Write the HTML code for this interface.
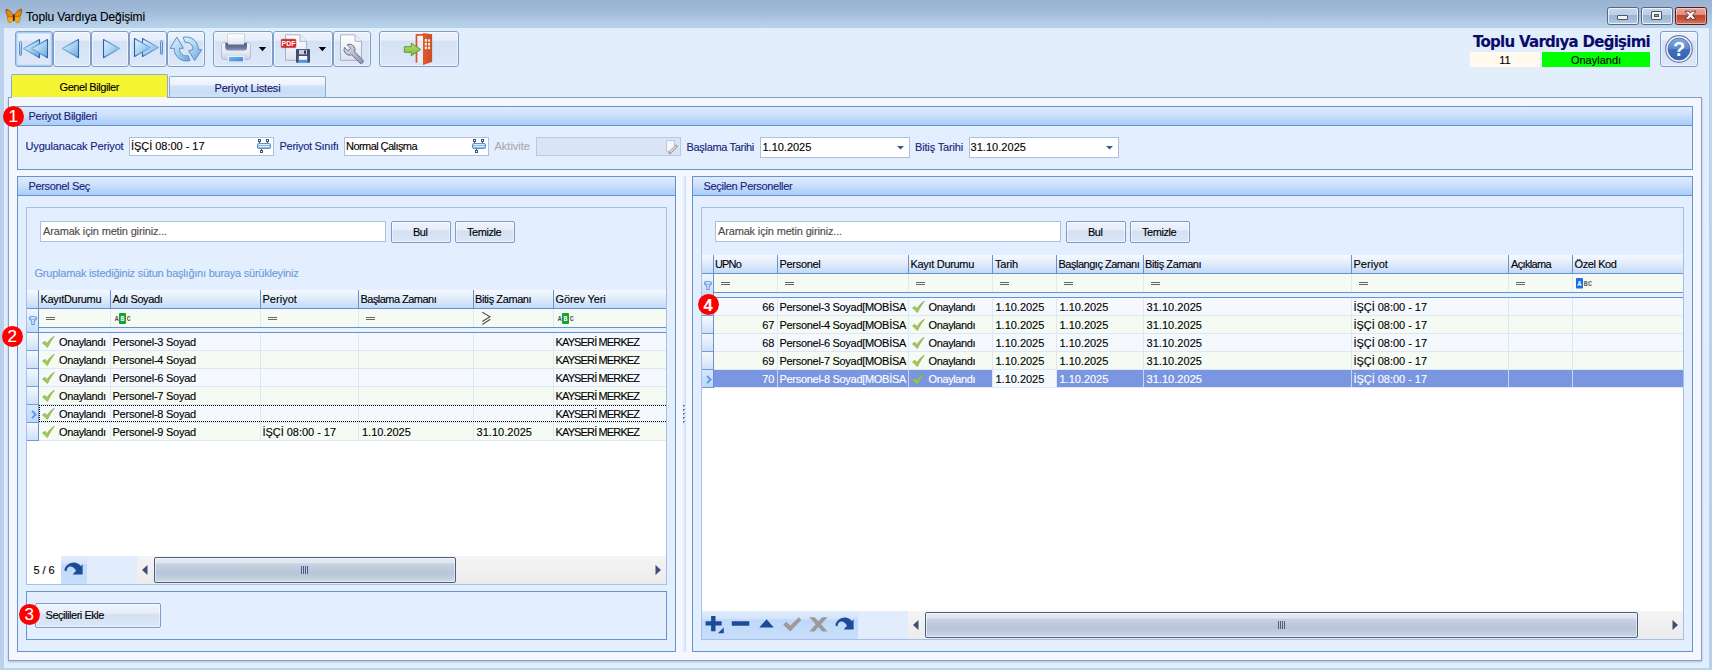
<!DOCTYPE html>
<html lang="tr"><head><meta charset="utf-8"><title>Toplu Vardıya Değişimi</title>
<style>
html,body{margin:0;padding:0}
body{width:1712px;height:670px;overflow:hidden;position:relative;background:#b9d1ea;font-family:"Liberation Sans",sans-serif;font-size:11px;color:#000}
div{position:absolute;box-sizing:border-box}
svg{position:absolute;overflow:visible}
.t{white-space:pre;line-height:16px;-webkit-text-stroke:.12px}
.tb{border:1px solid #7f9dc9;border-radius:3px;background:linear-gradient(to bottom,#ebf2fc 0,#e7effb 24%,#d5e2f5 27%,#dce8f8 100%);box-shadow:inset 0 0 0 1px rgba(255,255,255,.55)}
.gh{border:1px solid #6593cf;background:linear-gradient(to bottom,#e0ecfd 0,#cde0fb 45%,#b4d2fa 80%,#abcdfa 100%)}
.gb{border:1px solid #6593cf;border-top:none;background:#e3efff}
.pn{border:1px solid #a4c0e8;background:#e3efff}
.inp{border:1px solid #abc1de;background:#fff}
.btn{border:1px solid #7f9dc9;border-radius:2px;background:linear-gradient(to bottom,#eef4fc 0,#e5edfa 40%,#d4e1f3 44%,#dbe6f6 100%);box-shadow:inset 0 0 0 1px rgba(255,255,255,.5)}
.hd{background:linear-gradient(to bottom,#f7faff 0,#e4eefc 40%,#cfe1fa 80%,#c2d9fa 100%)}
.red{border-radius:50%;background:#f00;color:#fff;text-align:center}

</style></head><body>
<div style="left:0px;top:0px;width:1712px;height:28px;background:linear-gradient(to bottom,#99b3d3 0,#a1bad8 40%,#b0c9e4 75%,#b9d3eb 95%,#b5cde7 100%)"></div>
<div style="left:0px;top:28px;width:4px;height:642px;background:#b9d1ea"></div>
<div style="left:1709px;top:28px;width:3px;height:642px;background:linear-gradient(to bottom,#c3d7ed 0,#bad1ea 60%,#b9d0ea 100%)"></div>
<div style="left:1709px;top:28px;width:1px;height:300px;background:linear-gradient(to bottom,#b5cde8,#bcd2eb)"></div>
<div style="left:0px;top:668px;width:1712px;height:2px;background:#b9d1ea"></div>
<div style="left:4px;top:28px;width:1705px;height:640px;background:#e3eefd"></div>
<svg style="left:5px;top:8px" width="18" height="16" viewBox="0 0 18 16"><defs>
<linearGradient id="bw" x1="0" y1="0" x2="1" y2="1"><stop offset="0" stop-color="#8a4a10"/><stop offset=".25" stop-color="#e2820a"/><stop offset="1" stop-color="#f2930c"/></linearGradient>
<linearGradient id="bv" x1="0" y1="0" x2="0" y2="1"><stop offset="0" stop-color="#f7a00c"/><stop offset="1" stop-color="#fdb010"/></linearGradient></defs>
<g><path d="M8.200 8.500C7.500 4.500 4.500 1.500 1 1.200 .8 3.500 1.500 6.500 2.600 8.400 4.500 8 6.500 8.300 8.200 9.500Z" fill="url(#bw)" stroke="#7a4512" stroke-width=".6"/>
<path d="M8.300 9.800C6.500 8.300 4 8.200 2.600 8.800 2.200 11 3 13.800 4.600 14.900 6.200 14.500 7.800 12.800 8.400 11.500Z" fill="url(#bv)" stroke="#a8620c" stroke-width=".6"/></g>
<g transform="translate(17.600,0) scale(-1,1)"><path d="M8.200 8.500C7.500 4.500 4.500 1.500 1 1.200 .8 3.500 1.500 6.500 2.600 8.400 4.500 8 6.500 8.300 8.200 9.500Z" fill="url(#bw)" stroke="#7a4512" stroke-width=".6"/>
<path d="M8.300 9.800C6.500 8.300 4 8.200 2.600 8.800 2.200 11 3 13.800 4.600 14.900 6.200 14.500 7.800 12.800 8.400 11.500Z" fill="url(#bv)" stroke="#a8620c" stroke-width=".6"/></g>
<path d="M8.800 6.800V12.300" stroke="#4a2018" stroke-width="1.700" stroke-linecap="round"/>
</svg>
<div class="t" style="left:26px;top:9.03px;font-size:12px;letter-spacing:-0.129px;">Toplu Vardıya Değişimi</div>
<div style="left:1607px;top:7px;width:32px;height:18px;border:1px solid #5a6780;border-radius:2.500px;box-shadow:inset 0 0 0 1px rgba(255,255,255,.7);background:linear-gradient(to bottom,#c6d7ec 0,#bccfe8 44%,#9cb5d3 47%,#a4bcd9 75%,#b9cee7 100%)"><div style="left:9px;top:7px;width:11px;height:5px;background:#f4f2ee;border:1px solid #4d5568;border-radius:1px"></div></div>
<div style="left:1641px;top:7px;width:32px;height:18px;border:1px solid #5a6780;border-radius:2.500px;box-shadow:inset 0 0 0 1px rgba(255,255,255,.7);background:linear-gradient(to bottom,#c6d7ec 0,#bccfe8 44%,#9cb5d3 47%,#a4bcd9 75%,#b9cee7 100%)"><div style="left:9px;top:3px;width:11px;height:9px;background:#f4f2ee;border:1px solid #4d5568;border-radius:1px"><div style="left:2px;top:2px;width:5px;height:3px;background:#8fa8cc;border:1px solid #4d5568"></div></div></div>
<div style="left:1675px;top:7px;width:32px;height:18px;border:1px solid #5a1a1e;border-radius:2.500px;box-shadow:inset 0 0 0 1px rgba(255,255,255,.4);background:linear-gradient(to bottom,#e9aa9d 0,#dd8a79 44%,#c2432b 47%,#c9553c 75%,#d87c64 100%)"><svg style="left:8px;top:2px" width="13" height="11" viewBox="0 0 13 11"><path d="M1 1.200H4.800L6.500 3.200 8.200 1.200H12L8.500 5.200 12 9.300H8.200L6.500 7.300 4.800 9.300H1L4.500 5.200Z" fill="#fff" stroke="#5a3038" stroke-width=".9" stroke-linejoin="round"/></svg></div>
<svg style="left:-20px;top:0" width="4" height="4"><defs>
<linearGradient id="ab" x1="0" y1="0" x2="1" y2="1"><stop offset="0" stop-color="#e4f3fc"/><stop offset=".45" stop-color="#b0d8f2"/><stop offset="1" stop-color="#6aa3da"/></linearGradient>
<linearGradient id="asl" x1="0" y1="0" x2="1" y2="0"><stop offset="0" stop-color="#7db4e2"/><stop offset=".8" stop-color="#4f86c8"/><stop offset="1" stop-color="#2c5caa"/></linearGradient>
<linearGradient id="asr" x1="0" y1="0" x2="1" y2="0"><stop offset="0" stop-color="#2c5caa"/><stop offset=".2" stop-color="#4f86c8"/><stop offset="1" stop-color="#7db4e2"/></linearGradient>
<linearGradient id="pg" x1="0" y1="0" x2="0" y2="1"><stop offset="0" stop-color="#fff"/><stop offset="1" stop-color="#dfe3ee"/></linearGradient>
<linearGradient id="bl" x1="0" y1="0" x2="1" y2="1"><stop offset="0" stop-color="#7cbcf2"/><stop offset="1" stop-color="#3b83d6"/></linearGradient>
<linearGradient id="pb" x1="0" y1="0" x2="0" y2="1"><stop offset="0" stop-color="#f4f6fb"/><stop offset=".6" stop-color="#e4e8f3"/><stop offset="1" stop-color="#c9cfe4"/></linearGradient>
<linearGradient id="ps" x1="0" y1="0" x2="0" y2="1"><stop offset="0" stop-color="#55617f"/><stop offset=".6" stop-color="#66749a"/><stop offset="1" stop-color="#8b98b8"/></linearGradient>
<linearGradient id="wr" x1="0" y1="0" x2="1" y2="1"><stop offset="0" stop-color="#dfe3ec"/><stop offset=".5" stop-color="#b5bccc"/><stop offset="1" stop-color="#8d96ab"/></linearGradient>
<linearGradient id="dr" x1="0" y1="0" x2="1" y2="0"><stop offset="0" stop-color="#e2582d"/><stop offset="1" stop-color="#cf4d25"/></linearGradient>
<linearGradient id="ga" x1="0" y1="0" x2="0" y2="1"><stop offset="0" stop-color="#b9dd7c"/><stop offset="1" stop-color="#7fb83c"/></linearGradient>
</defs></svg>
<div class="tb" style="left:15px;top:31px;width:38px;height:36px;border-color:#7f9fcf;box-shadow:inset 0 0 0 1px #a9cdf5,inset 0 0 0 2px #c9e2fb;"><svg style="left:0;top:0" width="38" height="36"><rect x="3.500" y="9.500" width="2" height="14" rx="1" fill="url(#ab)" stroke="#5e8fc7" stroke-width="1" stroke-linejoin="round"/><path d="M23.500 7.500L7.500 16.600 23.500 25.700Z" fill="url(#ab)" stroke="url(#asl)" stroke-width="1.100" stroke-linejoin="round"/><path d="M31.500 7.500L15.500 16.600 31.500 25.700Z" fill="url(#ab)" stroke="url(#asl)" stroke-width="1.100" stroke-linejoin="round"/></svg></div>
<div class="tb" style="left:53px;top:31px;width:38px;height:36px;"><svg style="left:0;top:0" width="38" height="36"><path d="M24.500 7.500L8.300 16.600 24.500 25.700Z" fill="url(#ab)" stroke="url(#asl)" stroke-width="1.100" stroke-linejoin="round"/></svg></div>
<div class="tb" style="left:91px;top:31px;width:38px;height:36px;"><svg style="left:0;top:0" width="38" height="36"><path d="M11.500 7.500L27.700 16.600 11.500 25.700Z" fill="url(#ab)" stroke="url(#asr)" stroke-width="1.100" stroke-linejoin="round"/></svg></div>
<div class="tb" style="left:129px;top:31px;width:38px;height:36px;"><svg style="left:0;top:0" width="38" height="36"><path d="M12.500 6.500L28.500 15.500 12.500 24.500Z" fill="url(#ab)" stroke="url(#asr)" stroke-width="1.100" stroke-linejoin="round"/><path d="M4.500 6.500L20.500 15.500 4.500 24.500Z" fill="url(#ab)" stroke="url(#asr)" stroke-width="1.100" stroke-linejoin="round"/><rect x="30.500" y="8.500" width="2" height="14" rx="1" fill="url(#ab)" stroke="#5e8fc7" stroke-width="1" stroke-linejoin="round"/></svg></div>
<div class="tb" style="left:167px;top:31px;width:38px;height:36px;"><svg style="left:0;top:0" width="38" height="36"><g fill="url(#ab)" stroke="#5e8fc7" stroke-width="1" stroke-linejoin="round">
<path d="M15.200 5.400A12 12 0 0 1 30.300 17.600L33.700 17.700 26.700 28.600 20.700 18.800 25.100 17.400A6.800 6.800 0 0 0 17.100 10.300Z"/>
<path d="M8.800 5.100L15.500 16.300 11.500 16.300A6.800 6.800 0 0 0 20.100 23.600L22 28.400A12 12 0 0 1 6.300 16.400L2.200 16.300Z"/>
</g></svg></div>
<div class="tb" style="left:213px;top:31px;width:60px;height:36px;"><svg style="left:0;top:0" width="60" height="36">
<rect x="13.800" y="2" width="16.500" height="12" fill="url(#pg)" stroke="#c3c6d6" stroke-width=".8"/>
<path d="M7.500 13Q7.500 10.500 10 10.500H34Q36.500 10.500 36.500 13V25Q36.500 27.500 34 27.500H10Q7.500 27.500 7.500 25Z" fill="url(#pb)" stroke="#b4b9d0" stroke-width=".9"/>
<path d="M11.300 11H33V15.500Q33 18.400 30 18.400H14.300Q11.300 18.400 11.300 15.500Z" fill="url(#ps)"/>
<rect x="14" y="2.500" width="16" height="10" fill="url(#pg)"/>
<rect x="13.300" y="23.300" width="17.400" height="7.200" fill="#fff" stroke="#c9cfe2" stroke-width=".6"/>
<rect x="14.800" y="24.800" width="14.400" height="4.600" fill="url(#bl)"/>
<path d="M44.800 15H52.200L48.500 19.200Z" fill="#000"/></svg></div>
<div class="tb" style="left:273px;top:31px;width:60px;height:36px;"><svg style="left:0;top:0" width="60" height="36">
<path d="M11.500 2.800H26L32.500 9.300V28.300H11.500Z" fill="url(#pg)" stroke="#a3a8c8" stroke-width=".9"/>
<path d="M26 2.800V9.300H32.500" fill="#eef0f7" stroke="#a3a8c8" stroke-width=".9"/>
<rect x="7.200" y="7.200" width="14.700" height="8.400" rx="1" fill="#d8272d" stroke="#b51d22" stroke-width=".5"/>
<text x="14.600" y="14" font-family="Liberation Sans, sans-serif" font-size="7" font-weight="700" fill="#fff" text-anchor="middle">PDF</text>
<rect x="22" y="17" width="14" height="13.800" rx="1" fill="#3f4c70"/>
<rect x="24.800" y="24" width="8.400" height="6.800" fill="#f4f7fc"/><rect x="24.800" y="27.800" width="8.400" height="3" fill="#4a94e4"/>
<rect x="25" y="17.800" width="8" height="4.600" fill="#c8cfdf"/><rect x="30" y="18.500" width="2" height="3.200" fill="#2c3754"/>
<path d="M44.700 15H52.100L48.400 19.200Z" fill="#000"/></svg></div>
<div class="tb" style="left:333px;top:31px;width:38px;height:36px;"><svg style="left:0;top:0" width="38" height="36">
<path d="M6.500 2.800H21L27.500 9.300V28.300H6.500Z" fill="url(#pg)" stroke="#a3a8c8" stroke-width=".9"/>
<path d="M21 2.800V9.300H27.500" fill="#eef0f7" stroke="#a3a8c8" stroke-width=".9"/>
<path d="M13.160 12.680A5.600 5.600 0 0 1 20.650 19.890L28.780 28.020A2.100 2.100 0 0 1 25.820 30.980L17.690 22.850A5.600 5.600 0 0 1 10.480 15.360L13.950 18.830 16.630 16.150Z" fill="url(#wr)" stroke="#68718a" stroke-width="1" stroke-linejoin="round"/></svg></div>
<div class="tb" style="left:379px;top:31px;width:80px;height:36px;"><svg style="left:0;top:0" width="80" height="36">
<path d="M36.500 30.800V2.800H51.300V30" fill="rgba(255,255,255,.35)" stroke="#d8562d" stroke-width="1.700"/>
<path d="M43 1L52 2.200V30.100L43 33Z" fill="url(#dr)"/>
<g fill="#e4f3e4"><rect x="44.800" y="7" width="2.200" height="2.600"/><rect x="48" y="7.300" width="2.100" height="2.500"/><rect x="44.800" y="10.800" width="2.200" height="2.600"/><rect x="48" y="11" width="2.100" height="2.500"/><rect x="44.800" y="14.600" width="2.200" height="2.600"/><rect x="48" y="14.700" width="2.100" height="2.500"/></g>
<path d="M24.300 14.700H31.300V11.300L40.700 17.500 31.300 23.700V20.300H24.300Z" fill="url(#ga)" stroke="#5f9a2a" stroke-width="1" stroke-linejoin="round"/></svg></div>
<div class="t" style="left:1473px;top:33.81px;font-family:'DejaVu Sans', sans-serif;font-size:15px;font-weight:700;color:#0a0a6a;letter-spacing:-0.727px;">Toplu Vardıya Değişimi</div>
<div style="left:1470px;top:52px;width:70px;height:15px;background:#fffaed"></div>
<div class="t" style="left:1305px;width:400px;text-align:center;top:51.86px;">11</div>
<div style="left:1542px;top:52px;width:108px;height:15px;background:#00ff00"></div>
<div class="t" style="left:1396px;width:400px;text-align:center;top:51.86px;">Onaylandı</div>
<div class="tb" style="left:1660px;top:31px;width:38px;height:36px;"><svg style="left:4px;top:3px" width="28" height="28" viewBox="0 0 28 28"><defs><linearGradient id="hg" x1="0" y1="0" x2="0" y2="1"><stop offset="0" stop-color="#86abe0"/><stop offset=".48" stop-color="#5a8ad0"/><stop offset=".52" stop-color="#3f6ebc"/><stop offset="1" stop-color="#3563b4"/></linearGradient></defs>
 <circle cx="14" cy="14" r="13.300" fill="#f4f6fb" stroke="#6f7ba6" stroke-width="1.200"/><circle cx="14" cy="14" r="11" fill="url(#hg)" stroke="#3a5fa8" stroke-width=".7"/>
 <text x="14" y="21.200" font-family="Liberation Sans, sans-serif" font-size="20" font-weight="700" fill="#fff" text-anchor="middle">?</text></svg></div>
<div style="left:11px;top:74px;width:157px;height:24px;border:1px solid #8da9d3;border-bottom:none;border-radius:2px 2px 0 0;background:#f5f532"></div>
<div class="t" style="left:59.5px;top:78.86px;letter-spacing:-0.423px;">Genel Bilgiler</div>
<div style="left:169px;top:76px;width:157px;height:21px;border:1px solid #8da9d3;border-bottom:none;border-radius:2px 2px 0 0;background:linear-gradient(to bottom,#f6f9fe 0,#ebf2fc 40%,#d1e2f8 45%,#c9ddf8 80%,#d2e3f9 100%)"></div>
<div class="t" style="left:214.5px;top:79.86px;color:#15156a;letter-spacing:-0.166px;">Periyot Listesi</div>
<div style="left:8px;top:97px;width:1694px;height:564px;border:1px solid #8c9dbf;background:#f4f8fe;box-shadow:0 1px 2px rgba(120,140,180,.5)"></div>
<div style="left:12px;top:97px;width:155px;height:1px;background:#f6f9fe"></div>
<div class="gh" style="left:17px;top:106px;width:1676px;height:20px;"></div>
<div class="gb" style="left:17px;top:126px;width:1676px;height:44px;"></div>
<div class="t" style="left:28.5px;top:108.36px;color:#16247a;letter-spacing:-0.250px;">Periyot Bilgileri</div>
<div class="t" style="left:25.5px;top:138.36px;color:#16247a;letter-spacing:-0.152px;">Uygulanacak Periyot</div>
<div class="inp" style="left:129px;top:137px;width:145px;height:19px;"></div>
<div class="t" style="left:131px;top:138.36px;letter-spacing:-0.033px;">İŞÇİ 08:00 - 17</div>
<svg style="left:257px;top:139px" width="14" height="15" viewBox="0 0 14 15"><g fill="#fff" stroke="#4a5568" stroke-width="1"><rect x="1.500" y=".5" width="2" height="2"/><rect x="9.500" y=".5" width="2" height="2"/><rect x="3.500" y="11.500" width="2" height="2"/></g><path d="M2.500 3V5M10.500 3V5M4.500 9V11" stroke="#4a5568"/><rect x=".5" y="4.500" width="13" height="5" rx="1.200" fill="#8db8ea" stroke="#5a8fd0"/><path d="M1.500 5.500H12.500M1.500 7.500H12.500" stroke="#dcebfa" stroke-width="1"/></svg>
<div class="t" style="left:279.5px;top:138.36px;color:#16247a;letter-spacing:-0.285px;">Periyot Sınıfı</div>
<div class="inp" style="left:344px;top:137px;width:145px;height:19px;"></div>
<div class="t" style="left:346px;top:138.36px;letter-spacing:-0.561px;">Normal Çalışma</div>
<svg style="left:472px;top:139px" width="14" height="15" viewBox="0 0 14 15"><g fill="#fff" stroke="#4a5568" stroke-width="1"><rect x="1.500" y=".5" width="2" height="2"/><rect x="9.500" y=".5" width="2" height="2"/><rect x="3.500" y="11.500" width="2" height="2"/></g><path d="M2.500 3V5M10.500 3V5M4.500 9V11" stroke="#4a5568"/><rect x=".5" y="4.500" width="13" height="5" rx="1.200" fill="#8db8ea" stroke="#5a8fd0"/><path d="M1.500 5.500H12.500M1.500 7.500H12.500" stroke="#dcebfa" stroke-width="1"/></svg>
<div class="t" style="left:494.5px;top:138.36px;color:#a9a9a9;letter-spacing:0.004px;">Aktivite</div>
<div style="left:536px;top:137px;width:145px;height:19px;border:1px solid #b7c9e3;background:#d9e5f6"><svg style="left:128px;top:1px" width="14" height="16" viewBox="0 0 14 16"><path d="M1.500 1.500H9.500V8.500L6 12.500H1.500Z" fill="#f4f6fa" stroke="#c3c7d0"/><path d="M4.800 13.600L11.300 7.200" stroke="#9c9c9c" stroke-width="3" stroke-linecap="round"/><path d="M5.200 13L10.800 7.500" stroke="#e2e2e2" stroke-width="1.200" stroke-linecap="round"/></svg></div>
<div class="t" style="left:686.5px;top:138.86px;color:#16247a;letter-spacing:-0.318px;">Başlama Tarihi</div>
<div class="inp" style="left:760px;top:137px;width:150px;height:21px;"></div>
<div class="t" style="left:762.5px;top:138.86px;letter-spacing:-0.015px;">1.10.2025</div>
<svg style="left:897px;top:146px" width="7" height="4"><path d="M0 0H7L3.500 3.500Z" fill="#3a5a8c"/></svg>
<div class="t" style="left:915px;top:138.86px;color:#16247a;letter-spacing:-0.161px;">Bitiş Tarihi</div>
<div class="inp" style="left:969px;top:137px;width:150px;height:21px;"></div>
<div class="t" style="left:970.5px;top:138.86px;letter-spacing:0.044px;">31.10.2025</div>
<svg style="left:1106px;top:146px" width="7" height="4"><path d="M0 0H7L3.500 3.500Z" fill="#3a5a8c"/></svg>
<div class="gh" style="left:17px;top:176px;width:659px;height:20px;"></div>
<div class="gb" style="left:17px;top:196px;width:659px;height:456px;"></div>
<div class="t" style="left:28.5px;top:178.36px;color:#16247a;letter-spacing:-0.336px;">Personel Seç</div>
<div class="pn" style="left:26px;top:207px;width:641px;height:378px;"></div>
<div class="inp" style="left:40px;top:221px;width:346px;height:21px;"></div>
<div class="t" style="left:43px;top:223.36px;color:#4a4a4a;letter-spacing:-0.156px;">Aramak için metin giriniz...</div>
<div class="btn" style="left:391px;top:221px;width:60px;height:22px;"></div>
<div class="t" style="left:413px;top:224.36px;letter-spacing:-0.469px;">Bul</div>
<div class="btn" style="left:455px;top:221px;width:60px;height:22px;"></div>
<div class="t" style="left:467px;top:224.36px;letter-spacing:-0.442px;">Temizle</div>
<div class="t" style="left:34.5px;top:265.36px;color:#6a9bd8;letter-spacing:-0.228px;">Gruplamak istediğiniz sütun başlığını buraya sürükleyiniz</div>
<div class="hd" style="left:27px;top:290px;width:639px;height:18px;"></div>
<div style="left:27px;top:308px;width:639px;height:1px;background:#6593cf"></div>
<div style="left:38px;top:290px;width:1px;height:19px;background:#6593cf"></div>
<div style="left:110px;top:290px;width:1px;height:19px;background:#6593cf"></div>
<div style="left:260px;top:290px;width:1px;height:19px;background:#6593cf"></div>
<div style="left:358px;top:290px;width:1px;height:19px;background:#6593cf"></div>
<div style="left:473px;top:290px;width:1px;height:19px;background:#6593cf"></div>
<div style="left:553px;top:290px;width:1px;height:19px;background:#6593cf"></div>
<div class="t" style="left:40.5px;top:291.36px;letter-spacing:-0.318px;">KayıtDurumu</div>
<div class="t" style="left:112.5px;top:291.36px;letter-spacing:-0.403px;">Adı Soyadı</div>
<div class="t" style="left:262.5px;top:291.36px;letter-spacing:0.021px;">Periyot</div>
<div class="t" style="left:360.5px;top:291.36px;letter-spacing:-0.533px;">Başlama Zamanı</div>
<div class="t" style="left:475px;top:291.36px;letter-spacing:-0.412px;">Bitiş Zamanı</div>
<div class="t" style="left:555.5px;top:291.36px;letter-spacing:-0.127px;">Görev Yeri</div>
<div style="left:39px;top:309px;width:627px;height:18px;background:#f5faf3"></div>
<div style="left:110px;top:309px;width:1px;height:18px;background:#dfe9f7"></div>
<div style="left:260px;top:309px;width:1px;height:18px;background:#dfe9f7"></div>
<div style="left:358px;top:309px;width:1px;height:18px;background:#dfe9f7"></div>
<div style="left:473px;top:309px;width:1px;height:18px;background:#dfe9f7"></div>
<div style="left:553px;top:309px;width:1px;height:18px;background:#dfe9f7"></div>
<svg style="left:46px;top:317px" width="9" height="3"><path d="M0 .5H9M0 2.500H9" stroke="#666" stroke-width="1"/></svg>
<svg style="left:115px;top:313px" width="16" height="11"><rect x="4" y="0" width="7" height="11" rx="1" fill="#18a030"/><text x="-.3" y="8" font-family="Liberation Mono, monospace" font-size="6.500" font-weight="700" fill="#555">A</text><text x="5.500" y="8" font-family="Liberation Mono, monospace" font-size="6.500" font-weight="700" fill="#fff">B</text><text x="11.700" y="8" font-family="Liberation Mono, monospace" font-size="6.500" font-weight="700" fill="#555">C</text></svg>
<svg style="left:268px;top:317px" width="9" height="3"><path d="M0 .5H9M0 2.500H9" stroke="#666" stroke-width="1"/></svg>
<svg style="left:366px;top:317px" width="9" height="3"><path d="M0 .5H9M0 2.500H9" stroke="#666" stroke-width="1"/></svg>
<svg style="left:482px;top:312px" width="9" height="13"><path d="M.3 .3L8 4.800 .3 9.500M.3 12.500L8.300 7.300" fill="none" stroke="#505050" stroke-width="1.100"/></svg>
<svg style="left:558px;top:313px" width="16" height="11"><rect x="4" y="0" width="7" height="11" rx="1" fill="#18a030"/><text x="-.3" y="8" font-family="Liberation Mono, monospace" font-size="6.500" font-weight="700" fill="#555">A</text><text x="5.500" y="8" font-family="Liberation Mono, monospace" font-size="6.500" font-weight="700" fill="#fff">B</text><text x="11.700" y="8" font-family="Liberation Mono, monospace" font-size="6.500" font-weight="700" fill="#555">C</text></svg>
<div style="left:27px;top:327px;width:639px;height:1px;background:#6593cf"></div>
<div style="left:27px;top:328px;width:639px;height:4px;background:#e9f1fc"></div>
<div style="left:27px;top:309px;width:11px;height:23px;background:linear-gradient(to bottom,#f2f7fe 0,#dce9fb 50%,#c6dbf7 100%)"></div>
<div style="left:27px;top:332px;width:639px;height:1px;background:#6593cf"></div>
<div style="left:38px;top:309px;width:1px;height:24px;background:#6593cf"></div>
<svg style="left:29px;top:316px" width="8" height="9" viewBox="0 0 8 9"><path d="M.6 1.700Q.6 .5 4 .5T7.400 1.700V3L5.200 5.200V8.500H2.800V5.200L.6 3Z" fill="#e6f0fd" stroke="#6498e4" stroke-width="1.100"/><path d="M.8 2.800Q4 3.800 7.200 2.800" fill="none" stroke="#6498e4" stroke-width=".9"/></svg>
<div style="left:27px;top:333px;width:639px;height:223px;background:#fff"></div>
<div style="left:39px;top:333px;width:627px;height:18px;background:#f5f9fe"></div>
<div style="left:27px;top:333px;width:11px;height:18px;background:linear-gradient(to bottom,#f4f8fe 0,#e3edfb 50%,#cfe0f8 100%);border-bottom:1px solid #6f9bd6"></div>
<div style="left:38px;top:333px;width:1px;height:18px;background:#6593cf"></div>
<div style="left:39px;top:350px;width:627px;height:1px;background:#dde8f7"></div>
<div style="left:110px;top:333px;width:1px;height:18px;background:#dde8f7"></div>
<div style="left:260px;top:333px;width:1px;height:18px;background:#dde8f7"></div>
<div style="left:358px;top:333px;width:1px;height:18px;background:#dde8f7"></div>
<div style="left:473px;top:333px;width:1px;height:18px;background:#dde8f7"></div>
<div style="left:553px;top:333px;width:1px;height:18px;background:#dde8f7"></div>
<svg style="left:42px;top:336px" width="13" height="12" viewBox="0 0 13 12"><path d="M.5 7L3 5.300 5 7.800C6.800 4.600 9.200 2 12.300 .3 10 3.500 7.500 7 5.500 11.600Z" fill="#a0ca56" stroke="#7aa638" stroke-width=".6" stroke-linejoin="round"/></svg>
<div class="t" style="left:59px;top:334.36px;letter-spacing:-0.373px;">Onaylandı</div>
<div class="t" style="left:112.5px;top:334.36px;letter-spacing:-0.247px;">Personel-3 Soyad</div>
<div class="t" style="left:555.5px;top:334.36px;letter-spacing:-0.862px;">KAYSERİ MERKEZ</div>
<div style="left:39px;top:351px;width:627px;height:18px;background:#f5faf3"></div>
<div style="left:27px;top:351px;width:11px;height:18px;background:linear-gradient(to bottom,#f4f8fe 0,#e3edfb 50%,#cfe0f8 100%);border-bottom:1px solid #6f9bd6"></div>
<div style="left:38px;top:351px;width:1px;height:18px;background:#6593cf"></div>
<div style="left:39px;top:368px;width:627px;height:1px;background:#dde8f7"></div>
<div style="left:110px;top:351px;width:1px;height:18px;background:#dde8f7"></div>
<div style="left:260px;top:351px;width:1px;height:18px;background:#dde8f7"></div>
<div style="left:358px;top:351px;width:1px;height:18px;background:#dde8f7"></div>
<div style="left:473px;top:351px;width:1px;height:18px;background:#dde8f7"></div>
<div style="left:553px;top:351px;width:1px;height:18px;background:#dde8f7"></div>
<svg style="left:42px;top:354px" width="13" height="12" viewBox="0 0 13 12"><path d="M.5 7L3 5.300 5 7.800C6.800 4.600 9.200 2 12.300 .3 10 3.500 7.500 7 5.500 11.600Z" fill="#a0ca56" stroke="#7aa638" stroke-width=".6" stroke-linejoin="round"/></svg>
<div class="t" style="left:59px;top:352.36px;letter-spacing:-0.373px;">Onaylandı</div>
<div class="t" style="left:112.5px;top:352.36px;letter-spacing:-0.247px;">Personel-4 Soyad</div>
<div class="t" style="left:555.5px;top:352.36px;letter-spacing:-0.862px;">KAYSERİ MERKEZ</div>
<div style="left:39px;top:369px;width:627px;height:18px;background:#f5f9fe"></div>
<div style="left:27px;top:369px;width:11px;height:18px;background:linear-gradient(to bottom,#f4f8fe 0,#e3edfb 50%,#cfe0f8 100%);border-bottom:1px solid #6f9bd6"></div>
<div style="left:38px;top:369px;width:1px;height:18px;background:#6593cf"></div>
<div style="left:39px;top:386px;width:627px;height:1px;background:#dde8f7"></div>
<div style="left:110px;top:369px;width:1px;height:18px;background:#dde8f7"></div>
<div style="left:260px;top:369px;width:1px;height:18px;background:#dde8f7"></div>
<div style="left:358px;top:369px;width:1px;height:18px;background:#dde8f7"></div>
<div style="left:473px;top:369px;width:1px;height:18px;background:#dde8f7"></div>
<div style="left:553px;top:369px;width:1px;height:18px;background:#dde8f7"></div>
<svg style="left:42px;top:372px" width="13" height="12" viewBox="0 0 13 12"><path d="M.5 7L3 5.300 5 7.800C6.800 4.600 9.200 2 12.300 .3 10 3.500 7.500 7 5.500 11.600Z" fill="#a0ca56" stroke="#7aa638" stroke-width=".6" stroke-linejoin="round"/></svg>
<div class="t" style="left:59px;top:370.36px;letter-spacing:-0.373px;">Onaylandı</div>
<div class="t" style="left:112.5px;top:370.36px;letter-spacing:-0.247px;">Personel-6 Soyad</div>
<div class="t" style="left:555.5px;top:370.36px;letter-spacing:-0.862px;">KAYSERİ MERKEZ</div>
<div style="left:39px;top:387px;width:627px;height:18px;background:#f5faf3"></div>
<div style="left:27px;top:387px;width:11px;height:18px;background:linear-gradient(to bottom,#f4f8fe 0,#e3edfb 50%,#cfe0f8 100%);border-bottom:1px solid #6f9bd6"></div>
<div style="left:38px;top:387px;width:1px;height:18px;background:#6593cf"></div>
<div style="left:39px;top:404px;width:627px;height:1px;background:#dde8f7"></div>
<div style="left:110px;top:387px;width:1px;height:18px;background:#dde8f7"></div>
<div style="left:260px;top:387px;width:1px;height:18px;background:#dde8f7"></div>
<div style="left:358px;top:387px;width:1px;height:18px;background:#dde8f7"></div>
<div style="left:473px;top:387px;width:1px;height:18px;background:#dde8f7"></div>
<div style="left:553px;top:387px;width:1px;height:18px;background:#dde8f7"></div>
<svg style="left:42px;top:390px" width="13" height="12" viewBox="0 0 13 12"><path d="M.5 7L3 5.300 5 7.800C6.800 4.600 9.200 2 12.300 .3 10 3.500 7.500 7 5.500 11.600Z" fill="#a0ca56" stroke="#7aa638" stroke-width=".6" stroke-linejoin="round"/></svg>
<div class="t" style="left:59px;top:388.36px;letter-spacing:-0.373px;">Onaylandı</div>
<div class="t" style="left:112.5px;top:388.36px;letter-spacing:-0.247px;">Personel-7 Soyad</div>
<div class="t" style="left:555.5px;top:388.36px;letter-spacing:-0.862px;">KAYSERİ MERKEZ</div>
<div style="left:39px;top:405px;width:627px;height:18px;background:#f5f9fe"></div>
<div style="left:27px;top:405px;width:11px;height:18px;background:linear-gradient(to bottom,#d6e7fc,#bcd8fa);border-bottom:1px solid #6f9bd6"></div>
<div style="left:38px;top:405px;width:1px;height:18px;background:#6593cf"></div>
<div style="left:39px;top:422px;width:627px;height:1px;background:#dde8f7"></div>
<div style="left:110px;top:405px;width:1px;height:18px;background:#dde8f7"></div>
<div style="left:260px;top:405px;width:1px;height:18px;background:#dde8f7"></div>
<div style="left:358px;top:405px;width:1px;height:18px;background:#dde8f7"></div>
<div style="left:473px;top:405px;width:1px;height:18px;background:#dde8f7"></div>
<div style="left:553px;top:405px;width:1px;height:18px;background:#dde8f7"></div>
<svg style="left:42px;top:408px" width="13" height="12" viewBox="0 0 13 12"><path d="M.5 7L3 5.300 5 7.800C6.800 4.600 9.200 2 12.300 .3 10 3.500 7.500 7 5.500 11.600Z" fill="#a0ca56" stroke="#7aa638" stroke-width=".6" stroke-linejoin="round"/></svg>
<div class="t" style="left:59px;top:406.36px;letter-spacing:-0.373px;">Onaylandı</div>
<div class="t" style="left:112.5px;top:406.36px;letter-spacing:-0.247px;">Personel-8 Soyad</div>
<div class="t" style="left:555.5px;top:406.36px;letter-spacing:-0.862px;">KAYSERİ MERKEZ</div>
<svg style="left:30.5px;top:409.5px" width="6" height="9"><path d="M1 .8L4.600 4.500 1 8.200" fill="none" stroke="#5b97ea" stroke-width="1.900"/></svg>
<div style="left:39px;top:405px;width:627px;height:17px;border-top:1px dotted #000;border-bottom:1px dotted #000;border-left:1px dotted #000"></div>
<div style="left:39px;top:423px;width:627px;height:18px;background:#f5faf3"></div>
<div style="left:27px;top:423px;width:11px;height:18px;background:linear-gradient(to bottom,#f4f8fe 0,#e3edfb 50%,#cfe0f8 100%);border-bottom:1px solid #6f9bd6"></div>
<div style="left:38px;top:423px;width:1px;height:18px;background:#6593cf"></div>
<div style="left:39px;top:440px;width:627px;height:1px;background:#dde8f7"></div>
<div style="left:110px;top:423px;width:1px;height:18px;background:#dde8f7"></div>
<div style="left:260px;top:423px;width:1px;height:18px;background:#dde8f7"></div>
<div style="left:358px;top:423px;width:1px;height:18px;background:#dde8f7"></div>
<div style="left:473px;top:423px;width:1px;height:18px;background:#dde8f7"></div>
<div style="left:553px;top:423px;width:1px;height:18px;background:#dde8f7"></div>
<svg style="left:42px;top:426px" width="13" height="12" viewBox="0 0 13 12"><path d="M.5 7L3 5.300 5 7.800C6.800 4.600 9.200 2 12.300 .3 10 3.500 7.500 7 5.500 11.600Z" fill="#a0ca56" stroke="#7aa638" stroke-width=".6" stroke-linejoin="round"/></svg>
<div class="t" style="left:59px;top:424.36px;letter-spacing:-0.373px;">Onaylandı</div>
<div class="t" style="left:112.5px;top:424.36px;letter-spacing:-0.247px;">Personel-9 Soyad</div>
<div class="t" style="left:262.5px;top:424.36px;letter-spacing:-0.033px;">İŞÇİ 08:00 - 17</div>
<div class="t" style="left:362px;top:424.36px;letter-spacing:-0.015px;">1.10.2025</div>
<div class="t" style="left:476.5px;top:424.36px;letter-spacing:0.044px;">31.10.2025</div>
<div class="t" style="left:555.5px;top:424.36px;letter-spacing:-0.862px;">KAYSERİ MERKEZ</div>
<div style="left:27px;top:556px;width:34px;height:28px;background:#fff"></div>
<div class="t" style="left:33.5px;top:562.36px;letter-spacing:-0.081px;">5 / 6</div>
<div style="left:61px;top:556px;width:26px;height:28px;background:linear-gradient(to bottom,#e1edfc 0,#d2e3fb 29%,#c0d9f9 31%,#c8defa 100%)"></div>
<svg style="left:64px;top:562px" width="20" height="14" viewBox="0 0 20 14"><path d="M.3 8.300C1.300 3 6.800 -.2 11.500 .7 14 1.200 15.800 2.600 16.900 4.200L18.600 2.300V12.500H8.600L12 8.700C10.600 5.500 7.600 3.800 5 4.700 3.500 5.300 2.800 7 2.500 9.400Z" fill="#1f4a9a"/></svg>
<div style="left:87px;top:556px;width:50px;height:28px;background:#e1edfc"></div>
<div style="left:137px;top:556px;width:529px;height:28px;background:linear-gradient(to bottom,#f4f4f4,#ececec)"></div>
<svg style="left:142px;top:564.5px" width="6" height="10"><path d="M5.500 0V10L0 5Z" fill="#3f4f74"/></svg>
<svg style="left:655px;top:564.5px" width="6" height="10"><path d="M.5 0V10L6 5Z" fill="#3f4f74"/></svg>
<div style="left:154px;top:557px;width:302px;height:26px;border:1px solid #4d5e86;border-radius:2px;background:linear-gradient(to bottom,#e6eaf1 0,#dfe5ee 21%,#c8d2e1 25%,#b8c5d9 62%,#c4cfdf 85%,#d0d9e6 100%);box-shadow:inset 0 0 0 1px rgba(255,255,255,.5)"></div>
<div style="left:301px;top:566px;width:1px;height:8px;background:#4d5e86"></div>
<div style="left:303px;top:566px;width:1px;height:8px;background:#4d5e86"></div>
<div style="left:305px;top:566px;width:1px;height:8px;background:#4d5e86"></div>
<div style="left:307px;top:566px;width:1px;height:8px;background:#4d5e86"></div>
<div style="left:26px;top:591px;width:641px;height:49px;border:1px solid #6593cf;background:#e3efff"></div>
<div class="btn" style="left:35px;top:603px;width:126px;height:25px;"></div>
<div class="t" style="left:45.5px;top:607.36px;letter-spacing:-0.461px;">Seçilileri Ekle</div>
<div style="left:682px;top:176px;width:4px;height:476px;background:linear-gradient(to right,#f4f8fe 0,#e4eefc 40%,#c8ddf9 100%)"></div>
<div style="left:684px;top:406px;width:2px;height:1px;background:#fff"></div>
<div style="left:683px;top:405px;width:2px;height:2px;background:#4f84d0;border-radius:0 0 1px 0"></div>
<div style="left:684px;top:406px;width:1px;height:1px;background:#dbe8fa"></div>
<div style="left:684px;top:410px;width:2px;height:1px;background:#fff"></div>
<div style="left:683px;top:409px;width:2px;height:2px;background:#4f84d0;border-radius:0 0 1px 0"></div>
<div style="left:684px;top:410px;width:1px;height:1px;background:#dbe8fa"></div>
<div style="left:684px;top:414px;width:2px;height:1px;background:#fff"></div>
<div style="left:683px;top:413px;width:2px;height:2px;background:#4f84d0;border-radius:0 0 1px 0"></div>
<div style="left:684px;top:414px;width:1px;height:1px;background:#dbe8fa"></div>
<div style="left:684px;top:418px;width:2px;height:1px;background:#fff"></div>
<div style="left:683px;top:417px;width:2px;height:2px;background:#4f84d0;border-radius:0 0 1px 0"></div>
<div style="left:684px;top:418px;width:1px;height:1px;background:#dbe8fa"></div>
<div style="left:684px;top:422px;width:2px;height:1px;background:#fff"></div>
<div style="left:683px;top:421px;width:2px;height:2px;background:#4f84d0;border-radius:0 0 1px 0"></div>
<div style="left:684px;top:422px;width:1px;height:1px;background:#dbe8fa"></div>
<div class="gh" style="left:692px;top:176px;width:1001px;height:20px;"></div>
<div class="gb" style="left:692px;top:196px;width:1001px;height:456px;"></div>
<div class="t" style="left:703.5px;top:178.36px;color:#16247a;letter-spacing:-0.315px;">Seçilen Personeller</div>
<div class="pn" style="left:701px;top:207px;width:983px;height:433px;"></div>
<div class="inp" style="left:715px;top:221px;width:346px;height:21px;"></div>
<div class="t" style="left:718px;top:223.36px;color:#4a4a4a;letter-spacing:-0.156px;">Aramak için metin giriniz...</div>
<div class="btn" style="left:1066px;top:221px;width:60px;height:22px;"></div>
<div class="t" style="left:1088px;top:224.36px;letter-spacing:-0.469px;">Bul</div>
<div class="btn" style="left:1130px;top:221px;width:60px;height:22px;"></div>
<div class="t" style="left:1142px;top:224.36px;letter-spacing:-0.442px;">Temizle</div>
<div class="hd" style="left:702px;top:255px;width:981px;height:18px;"></div>
<div style="left:702px;top:273px;width:981px;height:1px;background:#6593cf"></div>
<div style="left:713px;top:255px;width:1px;height:19px;background:#6593cf"></div>
<div style="left:777px;top:255px;width:1px;height:19px;background:#6593cf"></div>
<div style="left:908px;top:255px;width:1px;height:19px;background:#6593cf"></div>
<div style="left:992px;top:255px;width:1px;height:19px;background:#6593cf"></div>
<div style="left:1056px;top:255px;width:1px;height:19px;background:#6593cf"></div>
<div style="left:1143px;top:255px;width:1px;height:19px;background:#6593cf"></div>
<div style="left:1351px;top:255px;width:1px;height:19px;background:#6593cf"></div>
<div style="left:1508px;top:255px;width:1px;height:19px;background:#6593cf"></div>
<div style="left:1572px;top:255px;width:1px;height:19px;background:#6593cf"></div>
<div class="t" style="left:715px;top:256.36px;letter-spacing:-0.836px;">UPNo</div>
<div class="t" style="left:779.5px;top:256.36px;letter-spacing:-0.303px;">Personel</div>
<div class="t" style="left:910.5px;top:256.36px;letter-spacing:-0.312px;">Kayıt Durumu</div>
<div class="t" style="left:995px;top:256.36px;letter-spacing:-0.169px;">Tarih</div>
<div class="t" style="left:1058.5px;top:256.36px;letter-spacing:-0.491px;">Başlangıç Zamanı</div>
<div class="t" style="left:1145px;top:256.36px;letter-spacing:-0.412px;">Bitiş Zamanı</div>
<div class="t" style="left:1353.5px;top:256.36px;letter-spacing:0.021px;">Periyot</div>
<div class="t" style="left:1511px;top:256.36px;letter-spacing:-0.644px;">Açıklama</div>
<div class="t" style="left:1574.5px;top:256.36px;letter-spacing:-0.406px;">Özel Kod</div>
<div style="left:714px;top:274px;width:969px;height:18px;background:#f5faf3"></div>
<div style="left:777px;top:274px;width:1px;height:18px;background:#dfe9f7"></div>
<div style="left:908px;top:274px;width:1px;height:18px;background:#dfe9f7"></div>
<div style="left:992px;top:274px;width:1px;height:18px;background:#dfe9f7"></div>
<div style="left:1056px;top:274px;width:1px;height:18px;background:#dfe9f7"></div>
<div style="left:1143px;top:274px;width:1px;height:18px;background:#dfe9f7"></div>
<div style="left:1351px;top:274px;width:1px;height:18px;background:#dfe9f7"></div>
<div style="left:1508px;top:274px;width:1px;height:18px;background:#dfe9f7"></div>
<div style="left:1572px;top:274px;width:1px;height:18px;background:#dfe9f7"></div>
<svg style="left:721px;top:282px" width="9" height="3"><path d="M0 .5H9M0 2.500H9" stroke="#666" stroke-width="1"/></svg>
<svg style="left:785px;top:282px" width="9" height="3"><path d="M0 .5H9M0 2.500H9" stroke="#666" stroke-width="1"/></svg>
<svg style="left:916px;top:282px" width="9" height="3"><path d="M0 .5H9M0 2.500H9" stroke="#666" stroke-width="1"/></svg>
<svg style="left:1000px;top:282px" width="9" height="3"><path d="M0 .5H9M0 2.500H9" stroke="#666" stroke-width="1"/></svg>
<svg style="left:1064px;top:282px" width="9" height="3"><path d="M0 .5H9M0 2.500H9" stroke="#666" stroke-width="1"/></svg>
<svg style="left:1151px;top:282px" width="9" height="3"><path d="M0 .5H9M0 2.500H9" stroke="#666" stroke-width="1"/></svg>
<svg style="left:1359px;top:282px" width="9" height="3"><path d="M0 .5H9M0 2.500H9" stroke="#666" stroke-width="1"/></svg>
<svg style="left:1516px;top:282px" width="9" height="3"><path d="M0 .5H9M0 2.500H9" stroke="#666" stroke-width="1"/></svg>
<svg style="left:1576px;top:278px" width="17" height="11"><rect x="0" y="0" width="7" height="10.500" rx=".8" fill="#1b6fe0"/><text x="1.500" y="7.800" font-family="Liberation Mono, monospace" font-size="6.500" font-weight="700" fill="#fff">A</text><text x="7.800" y="7.700" font-family="Liberation Mono, monospace" font-size="6.500" font-weight="700" fill="#5a5a5a">B</text><text x="12" y="7.700" font-family="Liberation Mono, monospace" font-size="6.500" font-weight="700" fill="#5a5a5a">C</text></svg>
<div style="left:702px;top:292px;width:981px;height:1px;background:#6593cf"></div>
<div style="left:702px;top:293px;width:981px;height:4px;background:#e9f1fc"></div>
<div style="left:702px;top:274px;width:11px;height:23px;background:linear-gradient(to bottom,#f2f7fe 0,#dce9fb 50%,#c6dbf7 100%)"></div>
<div style="left:702px;top:297px;width:981px;height:1px;background:#6593cf"></div>
<div style="left:713px;top:274px;width:1px;height:24px;background:#6593cf"></div>
<svg style="left:704px;top:281px" width="8" height="9" viewBox="0 0 8 9"><path d="M.6 1.700Q.6 .5 4 .5T7.400 1.700V3L5.200 5.200V8.500H2.800V5.200L.6 3Z" fill="#e6f0fd" stroke="#6498e4" stroke-width="1.100"/><path d="M.8 2.800Q4 3.800 7.200 2.800" fill="none" stroke="#6498e4" stroke-width=".9"/></svg>
<div style="left:702px;top:298px;width:981px;height:313px;background:#fff"></div>
<div style="left:714px;top:298px;width:969px;height:18px;background:#f5f9fe"></div>
<div style="left:702px;top:298px;width:11px;height:18px;background:linear-gradient(to bottom,#f4f8fe 0,#e3edfb 50%,#cfe0f8 100%);border-bottom:1px solid #6f9bd6"></div>
<div style="left:713px;top:298px;width:1px;height:18px;background:#6593cf"></div>
<div style="left:714px;top:315px;width:969px;height:1px;background:#dde8f7"></div>
<div style="left:777px;top:298px;width:1px;height:18px;background:#dde8f7"></div>
<div style="left:908px;top:298px;width:1px;height:18px;background:#dde8f7"></div>
<div style="left:992px;top:298px;width:1px;height:18px;background:#dde8f7"></div>
<div style="left:1056px;top:298px;width:1px;height:18px;background:#dde8f7"></div>
<div style="left:1143px;top:298px;width:1px;height:18px;background:#dde8f7"></div>
<div style="left:1351px;top:298px;width:1px;height:18px;background:#dde8f7"></div>
<div style="left:1508px;top:298px;width:1px;height:18px;background:#dde8f7"></div>
<div style="left:1572px;top:298px;width:1px;height:18px;background:#dde8f7"></div>
<div class="t" style="left:374.5px;width:400px;text-align:right;top:299.36px;">66</div>
<div class="t" style="left:779.5px;top:299.36px;letter-spacing:-0.296px;">Personel-3 Soyad[MOBİSA</div>
<svg style="left:912px;top:301px" width="13" height="12" viewBox="0 0 13 12"><path d="M.5 7L3 5.300 5 7.800C6.800 4.600 9.200 2 12.300 .3 10 3.500 7.500 7 5.500 11.600Z" fill="#a0ca56" stroke="#7aa638" stroke-width=".6" stroke-linejoin="round"/></svg>
<div class="t" style="left:928.5px;top:299.36px;letter-spacing:-0.373px;">Onaylandı</div>
<div class="t" style="left:995.5px;top:299.36px;letter-spacing:-0.015px;">1.10.2025</div>
<div class="t" style="left:1059.5px;top:299.36px;letter-spacing:-0.015px;">1.10.2025</div>
<div class="t" style="left:1146.5px;top:299.36px;letter-spacing:0.044px;">31.10.2025</div>
<div class="t" style="left:1353.5px;top:299.36px;letter-spacing:-0.033px;">İŞÇİ 08:00 - 17</div>
<div style="left:714px;top:316px;width:969px;height:18px;background:#f5faf3"></div>
<div style="left:702px;top:316px;width:11px;height:18px;background:linear-gradient(to bottom,#f4f8fe 0,#e3edfb 50%,#cfe0f8 100%);border-bottom:1px solid #6f9bd6"></div>
<div style="left:713px;top:316px;width:1px;height:18px;background:#6593cf"></div>
<div style="left:714px;top:333px;width:969px;height:1px;background:#dde8f7"></div>
<div style="left:777px;top:316px;width:1px;height:18px;background:#dde8f7"></div>
<div style="left:908px;top:316px;width:1px;height:18px;background:#dde8f7"></div>
<div style="left:992px;top:316px;width:1px;height:18px;background:#dde8f7"></div>
<div style="left:1056px;top:316px;width:1px;height:18px;background:#dde8f7"></div>
<div style="left:1143px;top:316px;width:1px;height:18px;background:#dde8f7"></div>
<div style="left:1351px;top:316px;width:1px;height:18px;background:#dde8f7"></div>
<div style="left:1508px;top:316px;width:1px;height:18px;background:#dde8f7"></div>
<div style="left:1572px;top:316px;width:1px;height:18px;background:#dde8f7"></div>
<div class="t" style="left:374.5px;width:400px;text-align:right;top:317.36px;">67</div>
<div class="t" style="left:779.5px;top:317.36px;letter-spacing:-0.296px;">Personel-4 Soyad[MOBİSA</div>
<svg style="left:912px;top:319px" width="13" height="12" viewBox="0 0 13 12"><path d="M.5 7L3 5.300 5 7.800C6.800 4.600 9.200 2 12.300 .3 10 3.500 7.500 7 5.500 11.600Z" fill="#a0ca56" stroke="#7aa638" stroke-width=".6" stroke-linejoin="round"/></svg>
<div class="t" style="left:928.5px;top:317.36px;letter-spacing:-0.373px;">Onaylandı</div>
<div class="t" style="left:995.5px;top:317.36px;letter-spacing:-0.015px;">1.10.2025</div>
<div class="t" style="left:1059.5px;top:317.36px;letter-spacing:-0.015px;">1.10.2025</div>
<div class="t" style="left:1146.5px;top:317.36px;letter-spacing:0.044px;">31.10.2025</div>
<div class="t" style="left:1353.5px;top:317.36px;letter-spacing:-0.033px;">İŞÇİ 08:00 - 17</div>
<div style="left:714px;top:334px;width:969px;height:18px;background:#f5f9fe"></div>
<div style="left:702px;top:334px;width:11px;height:18px;background:linear-gradient(to bottom,#f4f8fe 0,#e3edfb 50%,#cfe0f8 100%);border-bottom:1px solid #6f9bd6"></div>
<div style="left:713px;top:334px;width:1px;height:18px;background:#6593cf"></div>
<div style="left:714px;top:351px;width:969px;height:1px;background:#dde8f7"></div>
<div style="left:777px;top:334px;width:1px;height:18px;background:#dde8f7"></div>
<div style="left:908px;top:334px;width:1px;height:18px;background:#dde8f7"></div>
<div style="left:992px;top:334px;width:1px;height:18px;background:#dde8f7"></div>
<div style="left:1056px;top:334px;width:1px;height:18px;background:#dde8f7"></div>
<div style="left:1143px;top:334px;width:1px;height:18px;background:#dde8f7"></div>
<div style="left:1351px;top:334px;width:1px;height:18px;background:#dde8f7"></div>
<div style="left:1508px;top:334px;width:1px;height:18px;background:#dde8f7"></div>
<div style="left:1572px;top:334px;width:1px;height:18px;background:#dde8f7"></div>
<div class="t" style="left:374.5px;width:400px;text-align:right;top:335.36px;">68</div>
<div class="t" style="left:779.5px;top:335.36px;letter-spacing:-0.296px;">Personel-6 Soyad[MOBİSA</div>
<svg style="left:912px;top:337px" width="13" height="12" viewBox="0 0 13 12"><path d="M.5 7L3 5.300 5 7.800C6.800 4.600 9.200 2 12.300 .3 10 3.500 7.500 7 5.500 11.600Z" fill="#a0ca56" stroke="#7aa638" stroke-width=".6" stroke-linejoin="round"/></svg>
<div class="t" style="left:928.5px;top:335.36px;letter-spacing:-0.373px;">Onaylandı</div>
<div class="t" style="left:995.5px;top:335.36px;letter-spacing:-0.015px;">1.10.2025</div>
<div class="t" style="left:1059.5px;top:335.36px;letter-spacing:-0.015px;">1.10.2025</div>
<div class="t" style="left:1146.5px;top:335.36px;letter-spacing:0.044px;">31.10.2025</div>
<div class="t" style="left:1353.5px;top:335.36px;letter-spacing:-0.033px;">İŞÇİ 08:00 - 17</div>
<div style="left:714px;top:352px;width:969px;height:18px;background:#f5faf3"></div>
<div style="left:702px;top:352px;width:11px;height:18px;background:linear-gradient(to bottom,#f4f8fe 0,#e3edfb 50%,#cfe0f8 100%);border-bottom:1px solid #6f9bd6"></div>
<div style="left:713px;top:352px;width:1px;height:18px;background:#6593cf"></div>
<div style="left:714px;top:369px;width:969px;height:1px;background:#dde8f7"></div>
<div style="left:777px;top:352px;width:1px;height:18px;background:#dde8f7"></div>
<div style="left:908px;top:352px;width:1px;height:18px;background:#dde8f7"></div>
<div style="left:992px;top:352px;width:1px;height:18px;background:#dde8f7"></div>
<div style="left:1056px;top:352px;width:1px;height:18px;background:#dde8f7"></div>
<div style="left:1143px;top:352px;width:1px;height:18px;background:#dde8f7"></div>
<div style="left:1351px;top:352px;width:1px;height:18px;background:#dde8f7"></div>
<div style="left:1508px;top:352px;width:1px;height:18px;background:#dde8f7"></div>
<div style="left:1572px;top:352px;width:1px;height:18px;background:#dde8f7"></div>
<div class="t" style="left:374.5px;width:400px;text-align:right;top:353.36px;">69</div>
<div class="t" style="left:779.5px;top:353.36px;letter-spacing:-0.296px;">Personel-7 Soyad[MOBİSA</div>
<svg style="left:912px;top:355px" width="13" height="12" viewBox="0 0 13 12"><path d="M.5 7L3 5.300 5 7.800C6.800 4.600 9.200 2 12.300 .3 10 3.500 7.500 7 5.500 11.600Z" fill="#a0ca56" stroke="#7aa638" stroke-width=".6" stroke-linejoin="round"/></svg>
<div class="t" style="left:928.5px;top:353.36px;letter-spacing:-0.373px;">Onaylandı</div>
<div class="t" style="left:995.5px;top:353.36px;letter-spacing:-0.015px;">1.10.2025</div>
<div class="t" style="left:1059.5px;top:353.36px;letter-spacing:-0.015px;">1.10.2025</div>
<div class="t" style="left:1146.5px;top:353.36px;letter-spacing:0.044px;">31.10.2025</div>
<div class="t" style="left:1353.5px;top:353.36px;letter-spacing:-0.033px;">İŞÇİ 08:00 - 17</div>
<div style="left:714px;top:370px;width:969px;height:17px;background:#7b96e0"></div>
<div style="left:702px;top:370px;width:11px;height:18px;background:linear-gradient(to bottom,#d6e7fc,#bcd8fa);border-bottom:1px solid #6f9bd6"></div>
<div style="left:713px;top:370px;width:1px;height:18px;background:#6593cf"></div>
<div style="left:714px;top:387px;width:969px;height:1px;background:#dde8f7"></div>
<div style="left:777px;top:370px;width:1px;height:17px;background:#c9d5f2"></div>
<div style="left:908px;top:370px;width:1px;height:17px;background:#c9d5f2"></div>
<div style="left:992px;top:370px;width:1px;height:17px;background:#c9d5f2"></div>
<div style="left:1056px;top:370px;width:1px;height:17px;background:#c9d5f2"></div>
<div style="left:1143px;top:370px;width:1px;height:17px;background:#c9d5f2"></div>
<div style="left:1351px;top:370px;width:1px;height:17px;background:#c9d5f2"></div>
<div style="left:1508px;top:370px;width:1px;height:17px;background:#c9d5f2"></div>
<div style="left:1572px;top:370px;width:1px;height:17px;background:#c9d5f2"></div>
<div class="t" style="left:374.5px;width:400px;text-align:right;top:371.36px;color:#fff;">70</div>
<div class="t" style="left:779.5px;top:371.36px;color:#fff;letter-spacing:-0.296px;">Personel-8 Soyad[MOBİSA</div>
<svg style="left:912px;top:373px" width="13" height="12" viewBox="0 0 13 12"><path d="M.5 7L3 5.300 5 7.800C6.800 4.600 9.200 2 12.300 .3 10 3.500 7.500 7 5.500 11.600Z" fill="#a0ca56" stroke="#7aa638" stroke-width=".6" stroke-linejoin="round"/></svg>
<div class="t" style="left:928.5px;top:371.36px;color:#fff;letter-spacing:-0.373px;">Onaylandı</div>
<div style="left:992px;top:369px;width:65px;height:19px;background:#f5f9fe;border:1px solid #dde8f7"></div>
<div class="t" style="left:995.5px;top:371.36px;letter-spacing:-0.015px;">1.10.2025</div>
<div class="t" style="left:1059.5px;top:371.36px;color:#fff;letter-spacing:-0.015px;">1.10.2025</div>
<div class="t" style="left:1146.5px;top:371.36px;color:#fff;letter-spacing:0.044px;">31.10.2025</div>
<div class="t" style="left:1353.5px;top:371.36px;color:#fff;letter-spacing:-0.033px;">İŞÇİ 08:00 - 17</div>
<svg style="left:705.5px;top:374.5px" width="6" height="9"><path d="M1 .8L4.600 4.500 1 8.200" fill="none" stroke="#5b97ea" stroke-width="1.900"/></svg>
<div style="left:702px;top:611px;width:156px;height:28px;background:linear-gradient(to bottom,#e1edfc 0,#d2e3fb 29%,#c0d9f9 31%,#c8defa 100%)"></div>
<div style="left:858px;top:611px;width:50px;height:28px;background:#e1edfc"></div>
<svg style="left:705px;top:615px" width="20" height="20"><path d="M.6 8.400H16.700M8.300 1V16.200" stroke="#1f4a9a" stroke-width="4.400"/><path d="M18.800 12.600V18.200H12.800Z" fill="#1f4a9a"/></svg>
<svg style="left:731px;top:621px" width="19" height="5"><path d="M.8 2.500H18.300" stroke="#1f4a9a" stroke-width="4.500"/></svg>
<svg style="left:759px;top:619px" width="15" height="9"><path d="M7.500 .2L14.800 8.600H.3Z" fill="#1f4a9a"/></svg>
<svg style="left:783px;top:617px" width="19" height="15"><path d="M.2 7.800L3.200 4.800 7.300 8.600 15.800 .3 18.400 3 7.300 14.400Z" fill="#9b9b9b"/></svg>
<svg style="left:809px;top:617px" width="19" height="15"><path d="M.3 .3H5.600L9.400 4.600 13.200 .3H18.600L12.100 7.300 18.600 14.400H13.200L9.400 10 5.600 14.400H.3L6.700 7.300Z" fill="#9b9b9b"/></svg>
<svg style="left:835px;top:617px" width="20" height="14" viewBox="0 0 20 14"><path d="M.3 8.300C1.300 3 6.800 -.2 11.500 .7 14 1.200 15.800 2.600 16.900 4.200L18.600 2.300V12.500H8.600L12 8.700C10.600 5.500 7.600 3.800 5 4.700 3.500 5.300 2.800 7 2.500 9.400Z" fill="#1f4a9a"/></svg>
<div style="left:908px;top:611px;width:775px;height:28px;background:linear-gradient(to bottom,#f4f4f4,#ececec)"></div>
<svg style="left:913px;top:619.5px" width="6" height="10"><path d="M5.500 0V10L0 5Z" fill="#3f4f74"/></svg>
<svg style="left:1672px;top:619.5px" width="6" height="10"><path d="M.5 0V10L6 5Z" fill="#3f4f74"/></svg>
<div style="left:925px;top:612px;width:713px;height:26px;border:1px solid #4d5e86;border-radius:2px;background:linear-gradient(to bottom,#e6eaf1 0,#dfe5ee 21%,#c8d2e1 25%,#b8c5d9 62%,#c4cfdf 85%,#d0d9e6 100%);box-shadow:inset 0 0 0 1px rgba(255,255,255,.5)"></div>
<div style="left:1278px;top:621px;width:1px;height:8px;background:#4d5e86"></div>
<div style="left:1280px;top:621px;width:1px;height:8px;background:#4d5e86"></div>
<div style="left:1282px;top:621px;width:1px;height:8px;background:#4d5e86"></div>
<div style="left:1284px;top:621px;width:1px;height:8px;background:#4d5e86"></div>
<div class="red" style="left:2.8px;top:105.65px;width:21.6px;height:21.6px;"></div>
<div class="t" style="left:-186.8px;width:400px;text-align:center;top:108.63px;font-size:17px;color:#fff;-webkit-text-stroke:.15px #fff;">1</div>
<div class="red" style="left:1.75px;top:325.65px;width:21.6px;height:21.6px;"></div>
<div class="t" style="left:-187.85px;width:400px;text-align:center;top:328.63px;font-size:17px;color:#fff;-webkit-text-stroke:.15px #fff;">2</div>
<div class="red" style="left:18.8px;top:603.65px;width:21.6px;height:21.6px;"></div>
<div class="t" style="left:-170.8px;width:400px;text-align:center;top:606.63px;font-size:17px;color:#fff;-webkit-text-stroke:.15px #fff;">3</div>
<div class="red" style="left:697.7px;top:293.85px;width:21.6px;height:21.6px;"></div>
<div class="t" style="left:508.0px;width:400px;text-align:center;top:296.70px;font-size:16.5px;font-weight:700;color:#fff;">4</div>
</body></html>
